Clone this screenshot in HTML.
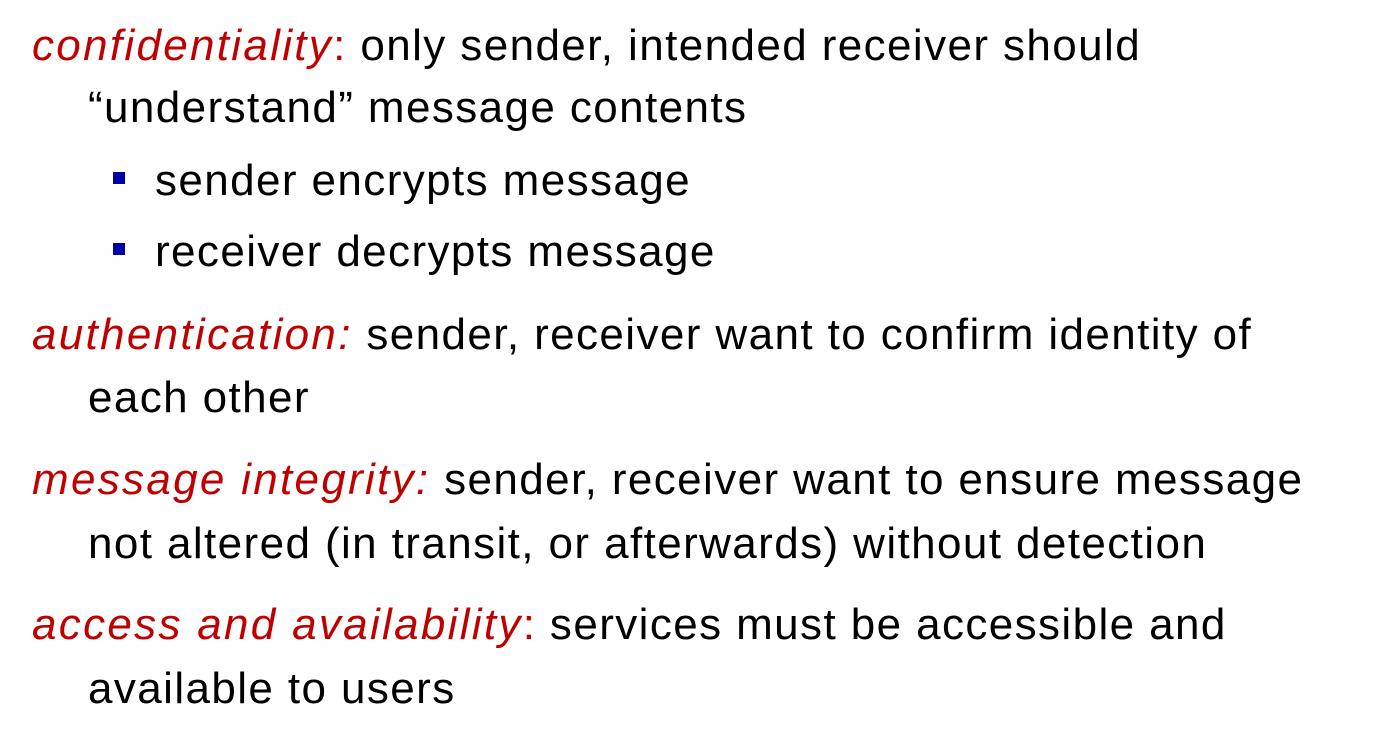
<!DOCTYPE html>
<html><head><meta charset="utf-8"><style>
html,body{margin:0;padding:0;background:#fff;width:1388px;height:742px;overflow:hidden}
.l{position:absolute;white-space:nowrap;font-family:"Liberation Sans",sans-serif;font-size:44px;letter-spacing:1.4px;color:#000;line-height:1;transform-origin:0 0}
.r{color:#c00000;font-style:italic;letter-spacing:2.3px}
.b{position:absolute;width:12px;height:12px;background:#0000a8}
</style></head><body>
<div class="l" style="left:32px;top:24px"><span class="r">confidentiality</span><span style="color:#c00000">:</span> only sender, intended receiver should</div>
<div class="l" style="left:88px;top:86px">“understand” message contents</div>
<div class="b" style="left:113px;top:172px"></div>
<div class="l" style="left:155px;top:159px">sender encrypts message</div>
<div class="b" style="left:113px;top:243px"></div>
<div class="l" style="left:155px;top:230px">receiver decrypts message</div>
<div class="l" style="left:32px;top:313px"><span class="r">authentication:</span> sender, receiver want to confirm identity of</div>
<div class="l" style="left:88px;top:376px">each other</div>
<div class="l" style="left:32px;top:458px"><span class="r">message integrity:</span> sender, receiver want to ensure message</div>
<div class="l" style="left:88px;top:522px">not altered (in transit, or afterwards) without detection</div>
<div class="l" style="left:32px;top:603px"><span class="r">access and availability</span><span style="color:#c00000">:</span> services must be accessible and</div>
<div class="l" style="left:88px;top:667px">available to users</div>
</body></html>
